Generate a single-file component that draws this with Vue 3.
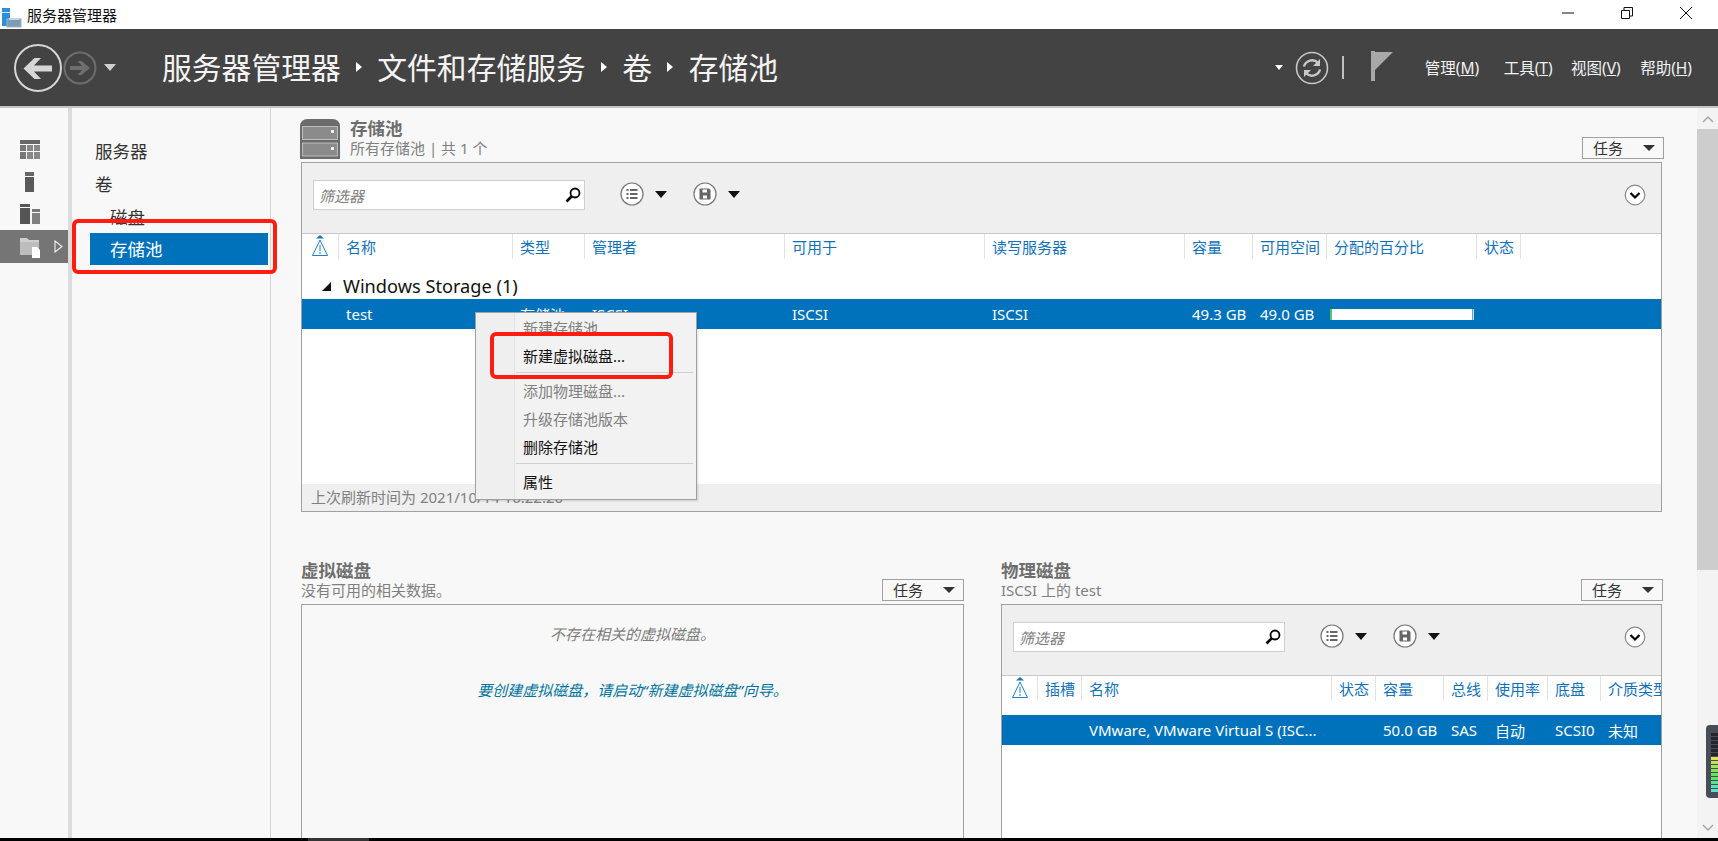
<script setup>
// Server Manager, File and Storage Services > Volumes > Storage Pools.
const railIcons = ['table', 'server', 'servers']
const crumbs = ['服务器管理器', '文件和存储服务', '卷', '存储池']

const menus = [
  { label: '管理', key: 'M' },
  { label: '工具', key: 'T' },
  { label: '视图', key: 'V' },
  { label: '帮助', key: 'H' }
]

const poolCols = ['名称', '类型', '管理者', '可用于', '读写服务器', '容量', '可用空间', '分配的百分比', '状态']
const diskCols = ['插槽', '名称', '状态', '容量', '总线', '使用率', '底盘', '介质类型']
const diskRow = ['', 'VMware, VMware Virtual S (ISC...', '', '50.0 GB', 'SAS', '自动', 'SCSI0', '未知']

// level meter in the corner, dark ticks on top and coloured ones below
const meter = Array.from({ length: 15 }, (_, i) => {
  if (i < 6) return '#23262c'
  const hue = 60 + (i - 6) * 14
  return `hsl(${hue}, 70%, 62%)`
})
</script>

<template>
  <div class="app">
    <div class="titlebar">
      <svg class="app-icon" viewBox="0 0 22 24" width="22" height="24" aria-hidden="true">
        <rect x="2" y="4" width="8" height="18" fill="#2f8fdc" />
        <rect x="2" y="8" width="8" height="1" fill="#cfe6f8" />
        <rect x="7" y="15" width="14" height="8" fill="#7b9db8" stroke="#9db4c6" stroke-width="1" />
        <rect x="9" y="14" width="10" height="2" fill="#c6d4df" />
      </svg>
      <span class="app-name">服务器管理器</span>
      <div class="win-controls">
        <svg viewBox="0 0 12 12" width="12" height="12" class="win-min" aria-hidden="true">
          <path d="M0 6H12" stroke="#111" fill="none" />
        </svg>
        <svg viewBox="0 0 12 12" width="12" height="12" class="win-max" aria-hidden="true">
          <path d="M0.5 3.5H8.5V11.5H0.5ZM3 3.5V0.5H11.5V9H8.5" stroke="#111" fill="none" />
        </svg>
        <svg viewBox="0 0 12 12" width="12" height="12" class="win-close" aria-hidden="true">
          <path d="M0 0L12 12M12 0L0 12" stroke="#111" fill="none" />
        </svg>
      </div>
    </div>

    <header class="header">
      <svg class="nav-back" viewBox="0 0 50 50" width="50" height="50" aria-hidden="true">
        <circle cx="25" cy="25" r="23" fill="none" stroke="#d6d6d6" stroke-width="2" />
        <path d="M39 22.5H21L28 15H21.5L10.5 25.5L21.5 36H28L21 28.5H39Z" fill="#d6d6d6" />
      </svg>
      <svg class="nav-forward" viewBox="0 0 34 34" width="34" height="34" aria-hidden="true">
        <circle cx="17" cy="17" r="15.5" fill="none" stroke="#6e6e6e" stroke-width="2" />
        <path d="M7 15H19L14.5 10H18.5L27 17L18.5 24H14.5L19 19H7Z" fill="#6e6e6e" />
      </svg>
      <span class="nav-caret"></span>

      <div class="crumbs">
        <template v-for="(crumb, i) in crumbs" :key="crumb">
          <span v-if="i" class="crumb-sep"></span>
          <span>{{ crumb }}</span>
        </template>
      </div>

      <div class="header-right">
        <span class="refresh-caret"></span>
        <svg class="refresh" viewBox="0 0 34 34" width="34" height="34" aria-hidden="true">
          <circle cx="17" cy="17" r="15.5" fill="none" stroke="#c8c8c8" stroke-width="1.6" />
          <path d="M9 15.5A8.2 8.2 0 0 1 23 12" fill="none" stroke="#c8c8c8" stroke-width="2.4" />
          <path d="M25 8V15H18Z" fill="#c8c8c8" />
          <path d="M25 18.5A8.2 8.2 0 0 1 11 22" fill="none" stroke="#c8c8c8" stroke-width="2.4" />
          <path d="M9 26V19H16Z" fill="#c8c8c8" />
        </svg>
        <span class="header-div"></span>
        <svg class="flag" viewBox="0 0 22 30" width="22" height="30" aria-hidden="true">
          <rect x="0" y="0" width="4" height="30" fill="#a8a8a8" />
          <path d="M4 1H22L4 19Z" fill="#a8a8a8" />
        </svg>
        <nav class="menus">
          <span v-for="m in menus" :key="m.key" class="menu-item">{{ m.label }}(<u>{{ m.key }}</u>)</span>
        </nav>
      </div>
    </header>

    <div class="body">
      <aside class="rail">
        <div v-for="icon in railIcons" :key="icon" class="rail-item">
          <svg v-if="icon === 'table'" viewBox="0 0 20 19" width="20" height="19" aria-hidden="true">
            <rect width="20" height="4" fill="#666" />
            <rect y="5" width="6" height="6" fill="#777" /><rect x="7" y="5" width="6" height="6" fill="#888" /><rect x="14" y="5" width="6" height="6" fill="#888" />
            <rect y="12" width="6" height="7" fill="#777" /><rect x="7" y="12" width="6" height="7" fill="#888" /><rect x="14" y="12" width="6" height="7" fill="#888" />
          </svg>
          <svg v-else-if="icon === 'server'" viewBox="0 0 9 20" width="9" height="20" aria-hidden="true">
            <rect width="9" height="4" fill="#666" />
            <rect y="5" width="9" height="15" fill="#5a5a5a" />
          </svg>
          <svg v-else viewBox="0 0 20 20" width="20" height="20" aria-hidden="true">
            <rect width="10" height="3" fill="#555" />
            <rect y="4" width="10" height="16" fill="#555" />
            <rect x="12" y="5" width="8" height="3" fill="#777" />
            <rect x="12" y="9" width="8" height="11" fill="#808080" />
          </svg>
        </div>
        <div class="rail-item rail-item--active">
          <svg viewBox="0 0 21 22" width="21" height="22" aria-hidden="true">
            <path d="M0 2H7L9 4H19V15H0Z" fill="#cfcfcf" />
            <path d="M0 6H19V19H0Z" fill="#bdbdbd" />
            <path d="M12 11H17L20 14V22H12Z" fill="#fff" />
          </svg>
          <svg class="rail-arrow" viewBox="0 0 9 13" width="9" height="13" aria-hidden="true">
            <path d="M1 1L8 6.5L1 12Z" fill="none" stroke="#f0f0f0" stroke-width="1.1" />
          </svg>
        </div>
      </aside>
      <div class="gutter"></div>

      <nav class="side">
        <div class="side-item">服务器</div>
        <div class="side-item side-item--vol">卷</div>
        <div class="side-item side-item--sub side-item--disk">磁盘</div>
        <div class="side-item side-item--sub side-item--active">存储池</div>
      </nav>

      <main class="content">
        <section>
          <div class="section-head">
            <svg class="pool-icon" viewBox="0 0 40 40" width="40" height="40" aria-hidden="true">
              <path d="M0 8Q0 0 8 0H32Q40 0 40 8V40H0Z" fill="#6b6b6b" />
              <rect x="2.5" y="7.5" width="35" height="13" fill="#8b8b8b" stroke="#bdbdbd" />
              <rect x="2.5" y="24" width="35" height="13" fill="#8b8b8b" stroke="#bdbdbd" />
              <rect x="31" y="11" width="3" height="3" fill="#eee" />
              <rect x="31" y="28" width="3" height="3" fill="#eee" />
            </svg>
            <div class="section-text">
              <div class="section-title">存储池</div>
              <div class="section-sub">所有存储池 | 共 1 个</div>
            </div>
            <div class="task-btn"><span>任务</span><i class="caret"></i></div>
          </div>

          <div class="panel panel--pool">
            <div class="toolbar">
              <div class="filter">
                <input type="text" placeholder="筛选器" />
                <svg viewBox="0 0 16 16" width="16" height="16" aria-hidden="true">
                  <circle cx="10" cy="6" r="4.5" fill="none" stroke="#000" stroke-width="1.8" />
                  <path d="M6.5 9.5L1.5 14.5" stroke="#000" stroke-width="2.6" />
                </svg>
              </div>
              <svg class="tool-circle" viewBox="0 0 24 24" width="24" height="24" aria-hidden="true">
                <circle cx="12" cy="12" r="11" fill="#fff" stroke="#777" stroke-width="1.2" />
                <path d="M6.5 8H8.5M6.5 12H8.5M6.5 16H8.5M10 8H17.5M10 12H17.5M10 16H17.5" stroke="#666" stroke-width="2" />
              </svg>
              <i class="caret caret--tool"></i>
              <svg class="tool-circle tool-circle--save" viewBox="0 0 24 24" width="24" height="24" aria-hidden="true">
                <circle cx="12" cy="12" r="11" fill="#fff" stroke="#777" stroke-width="1.2" />
                <path d="M6.5 6.5H16L17.5 8V17.5H6.5Z" fill="#666" />
                <rect x="9.5" y="7.5" width="4.5" height="3" fill="#fff" />
                <rect x="10" y="13.5" width="4" height="3" fill="#fff" />
              </svg>
              <i class="caret caret--tool"></i>
              <svg class="tool-expand" viewBox="0 0 22 22" width="22" height="22" aria-hidden="true">
                <circle cx="11" cy="11" r="9.8" fill="#fff" stroke="#888" stroke-width="1.2" />
                <path d="M6.5 9L11 13.5L15.5 9" fill="none" stroke="#000" stroke-width="2.2" />
              </svg>
            </div>

            <div class="grid-row grid-head pool-cols">
              <div class="alert-cell">
                <svg viewBox="0 0 16 21" width="16" height="21" aria-hidden="true">
                  <path d="M8 0L12 3.5H4Z" fill="#1775bb" />
                  <path d="M8 5L15.5 20.5H0.5Z" fill="#fff" stroke="#1f7fc4" stroke-width="1" />
                  <path d="M8 10V16M8 17V19" stroke="#1f7fc4" stroke-width="1" />
                </svg>
              </div>
              <div v-for="col in poolCols" :key="col" class="head-cell">{{ col }}</div>
              <div class="head-cell"></div>
            </div>

            <div class="group-row">
              <i class="group-toggle"></i>
              <span>Windows Storage (1)</span>
            </div>

            <div class="grid-row data-row pool-cols">
              <div></div>
              <div class="data-cell">test</div>
              <div class="data-cell">存储池</div>
              <div class="data-cell">ISCSI</div>
              <div class="data-cell">ISCSI</div>
              <div class="data-cell">ISCSI</div>
              <div class="data-cell">49.3 GB</div>
              <div class="data-cell">49.0 GB</div>
              <div class="data-cell data-cell--bar"><div class="usage"><div class="usage-fill"></div></div></div>
              <div></div>
            </div>

            <div class="panel-fill"></div>
            <div class="panel-foot">上次刷新时间为 2021/10/14 16:22:20</div>
          </div>
        </section>

        <div class="lower">
          <section>
            <div class="section-head">
              <div class="section-text">
                <div class="section-title">虚拟磁盘</div>
                <div class="section-sub">没有可用的相关数据。</div>
              </div>
              <div class="task-btn"><span>任务</span><i class="caret"></i></div>
            </div>
            <div class="panel panel--empty">
              <p class="empty-note">不存在相关的虚拟磁盘。</p>
              <p class="empty-link">要创建虚拟磁盘，请启动“新建虚拟磁盘”向导。</p>
            </div>
          </section>

          <section>
            <div class="section-head">
              <div class="section-text">
                <div class="section-title">物理磁盘</div>
                <div class="section-sub">ISCSI 上的 test</div>
              </div>
              <div class="task-btn"><span>任务</span><i class="caret"></i></div>
            </div>
            <div class="panel panel--disk">
              <div class="toolbar">
                <div class="filter">
                  <input type="text" placeholder="筛选器" />
                  <svg viewBox="0 0 16 16" width="16" height="16" aria-hidden="true">
                    <circle cx="10" cy="6" r="4.5" fill="none" stroke="#000" stroke-width="1.8" />
                    <path d="M6.5 9.5L1.5 14.5" stroke="#000" stroke-width="2.6" />
                  </svg>
                </div>
                <svg class="tool-circle" viewBox="0 0 24 24" width="24" height="24" aria-hidden="true">
                  <circle cx="12" cy="12" r="11" fill="#fff" stroke="#777" stroke-width="1.2" />
                  <path d="M6.5 8H8.5M6.5 12H8.5M6.5 16H8.5M10 8H17.5M10 12H17.5M10 16H17.5" stroke="#666" stroke-width="2" />
                </svg>
                <i class="caret caret--tool"></i>
                <svg class="tool-circle tool-circle--save" viewBox="0 0 24 24" width="24" height="24" aria-hidden="true">
                  <circle cx="12" cy="12" r="11" fill="#fff" stroke="#777" stroke-width="1.2" />
                  <path d="M6.5 6.5H16L17.5 8V17.5H6.5Z" fill="#666" />
                  <rect x="9.5" y="7.5" width="4.5" height="3" fill="#fff" />
                  <rect x="10" y="13.5" width="4" height="3" fill="#fff" />
                </svg>
                <i class="caret caret--tool"></i>
                <svg class="tool-expand" viewBox="0 0 22 22" width="22" height="22" aria-hidden="true">
                  <circle cx="11" cy="11" r="9.8" fill="#fff" stroke="#888" stroke-width="1.2" />
                  <path d="M6.5 9L11 13.5L15.5 9" fill="none" stroke="#000" stroke-width="2.2" />
                </svg>
              </div>

              <div class="grid-row grid-head disk-cols">
                <div class="alert-cell">
                  <svg viewBox="0 0 16 21" width="16" height="21" aria-hidden="true">
                    <path d="M8 0L12 3.5H4Z" fill="#1775bb" />
                    <path d="M8 5L15.5 20.5H0.5Z" fill="#fff" stroke="#1f7fc4" stroke-width="1" />
                    <path d="M8 10V16M8 17V19" stroke="#1f7fc4" stroke-width="1" />
                  </svg>
                </div>
                <div v-for="col in diskCols" :key="col" class="head-cell">{{ col }}</div>
              </div>

              <div class="grid-row data-row data-row--disk disk-cols">
                <div></div>
                <div v-for="(val, i) in diskRow" :key="i" class="data-cell">{{ val }}</div>
              </div>
            </div>
          </section>
        </div>
      </main>

      <div class="scrollbar">
        <div class="scroll-btn">
          <svg viewBox="0 0 12 8" width="12" height="8" aria-hidden="true">
            <path d="M1 7L6 2L11 7" fill="none" stroke="#a6a6a6" stroke-width="1.5" />
          </svg>
        </div>
        <div class="scroll-thumb"></div>
        <div class="scroll-track"></div>
        <div class="scroll-btn">
          <svg viewBox="0 0 12 8" width="12" height="8" aria-hidden="true">
            <path d="M1 1L6 6L11 1" fill="none" stroke="#a6a6a6" stroke-width="1.5" />
          </svg>
        </div>
      </div>
    </div>

    <div class="taskstrip"><span></span></div>

    <!-- context menu and the red annotation boxes lie over the page -->
    <div class="ctx-menu">
      <div class="ctx-item ctx-item--off">新建存储池</div>
      <div class="ctx-item">新建虚拟磁盘...</div>
      <div class="ctx-sep"></div>
      <div class="ctx-item ctx-item--off">添加物理磁盘...</div>
      <div class="ctx-item ctx-item--off">升级存储池版本</div>
      <div class="ctx-item">删除存储池</div>
      <div class="ctx-sep"></div>
      <div class="ctx-item">属性</div>
    </div>
    <div class="mark mark--nav"></div>
    <div class="mark mark--menu"></div>

    <div class="meter">
      <i v-for="(color, i) in meter" :key="i" :style="{ background: color }"></i>
    </div>
  </div>
</template>

<style scoped>
.app {
  position: relative;
  width: 1718px;
  height: 841px;
  display: flex;
  flex-direction: column;
  overflow: hidden;
  background: #f8f8f8;
  color: #222;
  font-family: "Noto Sans", "Noto Sans CJK SC", sans-serif;
  font-size: 15px;
}

.titlebar {
  height: 29px;
  display: flex;
  align-items: center;
  background: #fff;
  flex-shrink: 0;
}

.app-icon {
  flex-shrink: 0;
  margin-top: 2px;
}

.app-name {
  margin-left: 5px;
  font-size: 15px;
  color: #111;
}

.win-controls {
  margin-left: auto;
  margin-top: -3px;
  display: flex;
  align-items: center;
}

.win-min {
  margin-right: 47px;
}

.win-max {
  margin-right: 47px;
}

.win-close {
  margin-right: 26px;
}

.header {
  height: 77px;
  flex-shrink: 0;
  display: flex;
  align-items: center;
  background: #434343;
  border-bottom: 2px solid #c4c4c4;
  color: #fff;
}

.nav-back {
  margin-left: 13px;
  flex-shrink: 0;
}

.nav-forward {
  margin-left: 0;
  flex-shrink: 0;
}

.nav-caret {
  width: 0;
  height: 0;
  margin-left: 7px;
  border-left: 6px solid transparent;
  border-right: 6px solid transparent;
  border-top: 7px solid #d0d0d0;
}

.crumbs {
  display: flex;
  align-items: center;
  margin-left: 46px;
  font-size: 29.8px;
  color: #f4f4f4;
  line-height: 1;
}

.crumb-sep {
  width: 36.5px;
  display: flex;
  justify-content: center;
}

.crumb-sep::before {
  content: "";
  border-top: 5px solid transparent;
  border-bottom: 5px solid transparent;
  border-left: 6px solid #fff;
}

.header-right {
  margin-left: auto;
  display: flex;
  align-items: center;
}

.refresh-caret {
  width: 0;
  height: 0;
  border-left: 4.5px solid transparent;
  border-right: 4.5px solid transparent;
  border-top: 5px solid #fff;
}

.refresh {
  margin-left: 12px;
}

.header-div {
  width: 2px;
  height: 23px;
  margin-left: 13px;
  background: #c0c0c0;
}

.flag {
  margin-left: 27px;
  margin-top: -3px;
}

.menus {
  display: flex;
  margin-left: 32px;
  margin-right: 26px;
  font-size: 15.5px;
}

.menu-item {
  color: #f2f2f2;
  margin-left: 24.5px;
}

.menu-item:nth-child(1) {
  margin-left: 0;
}

.menu-item:nth-child(3) {
  margin-left: 18.5px;
}

.menu-item:nth-child(4) {
  margin-left: 19.5px;
}

.body {
  flex: 1;
  min-height: 0;
  display: flex;
}

.rail {
  width: 68px;
  flex-shrink: 0;
  padding-top: 23px;
  background: #f8f8f8;
}

.rail-item {
  position: relative;
  height: 33px;
  display: flex;
  align-items: center;
  padding-left: 20px;
}

.rail-item:nth-child(1) svg {
  margin-top: 3px;
}

.rail-item:nth-child(2) {
  padding-left: 25px;
}

.rail-item:nth-child(2) svg {
  margin-top: 2px;
}

.rail-item--active {
  background: #757575;
}

.rail-arrow {
  position: absolute;
  left: 54px;
  top: 10px;
}

.gutter {
  width: 4px;
  flex-shrink: 0;
  background: #dcdcdc;
}

.side {
  width: 198px;
  flex-shrink: 0;
  padding-top: 29px;
  border-right: 1px solid #d4d4d4;
  box-sizing: content-box;
}

.side-item {
  height: 32px;
  line-height: 29px;
  margin-right: 2px;
  padding-left: 23px;
  font-size: 17.5px;
  color: #333;
}

.side-item--vol {
  line-height: 31px;
}

.side-item--sub {
  margin-left: 18px;
  padding-left: 20px;
}

.side-item--disk {
  line-height: 32px;
}

.side-item--active {
  line-height: 32px;
  background: #0072bc;
  color: #fff;
}

.content {
  flex: 1;
  min-width: 0;
  overflow: hidden;
  padding: 10px 35px 0 30px;
}

.section-head {
  display: flex;
  align-items: flex-end;
  height: 41px;
  margin-bottom: 3px;
  line-height: 1.2;
}

.section-text {
  padding-bottom: 2px;
}

.pool-icon {
  margin-left: -1px;
  margin-right: 10px;
  flex-shrink: 0;
}

.section-title {
  font-size: 17.5px;
  font-weight: 700;
  color: #6e6e6e;
}

.section-sub {
  font-size: 15px;
  color: #808080;
}

.task-btn {
  margin-left: auto;
  margin-right: -1px;
  width: 82px;
  height: 22px;
  box-sizing: border-box;
  display: flex;
  align-items: center;
  padding: 0 8px 0 10px;
  border: 1px solid #a0a0a0;
  font-size: 15px;
  color: #333;
  background: #f8f8f8;
}

section:first-child > .section-head > .task-btn {
  margin-right: -2px;
}

.lower section:first-child > .section-head > .task-btn {
  margin-right: 0;
}

.caret {
  display: block;
  width: 0;
  height: 0;
  margin-left: auto;
  border-left: 6px solid transparent;
  border-right: 6px solid transparent;
  border-top: 6px solid #333;
}

.panel {
  display: flex;
  flex-direction: column;
  box-sizing: border-box;
  overflow: hidden;
  border: 1px solid #a0a0a0;
  background: #fff;
}

.panel--pool {
  height: 350px;
}

.panel--empty {
  height: 260px;
  background: #f8f8f8;
  align-items: center;
}

.panel--disk {
  height: 260px;
}

.toolbar {
  height: 71px;
  flex-shrink: 0;
  box-sizing: border-box;
  display: flex;
  align-items: flex-start;
  padding: 17px 15px 0 11px;
  background: #efefef;
  border-bottom: 1px solid #c8c8c8;
}

.filter {
  width: 272px;
  height: 30px;
  flex-shrink: 0;
  box-sizing: border-box;
  display: flex;
  align-items: center;
  padding-right: 3px;
  background: #fff;
  border: 1px solid #cfcfcf;
}

.filter input {
  flex: 1;
  min-width: 0;
  height: 100%;
  border: 0;
  padding: 0 0 0 5px;
  outline: none;
  background: transparent;
  font: italic 15px "Noto Sans CJK SC", sans-serif;
}

.filter input::placeholder {
  color: #808080;
  opacity: 1;
}

.tool-circle {
  margin-left: 35px;
  margin-top: 2px;
  flex-shrink: 0;
}

.tool-circle--save {
  margin-left: 26px;
}

.caret--tool {
  margin-left: 11px;
  margin-top: 11px;
  border-top-color: #111;
  border-top-width: 7px;
}

.tool-expand {
  margin-left: auto;
  margin-top: 4px;
  flex-shrink: 0;
}

.grid-row {
  display: grid;
  flex-shrink: 0;
}

.pool-cols {
  grid-template-columns: 36px 174px 72px 200px 200px 200px 68px 74px 150px 44px 1fr;
}

.disk-cols {
  grid-template-columns: 35px 44px 250px 44px 68px 44px 60px 53px 1fr;
}

.grid-head {
  height: 25px;
  overflow: hidden;
  white-space: nowrap;
}

.alert-cell {
  display: flex;
  justify-content: center;
  padding-top: 1px;
}

.head-cell {
  padding-left: 7px;
  line-height: 26px;
  font-size: 15px;
  color: #1272b8;
  border-left: 1px solid #e2e2e2;
}

.group-row {
  height: 40px;
  flex-shrink: 0;
  box-sizing: border-box;
  display: flex;
  align-items: center;
  padding: 14px 0 0 20px;
  font-size: 18.2px;
  color: #111;
}

.group-toggle {
  width: 0;
  height: 0;
  margin-right: 12px;
  border-left: 9px solid transparent;
  border-bottom: 9px solid #111;
}

.data-row {
  height: 30px;
  align-items: center;
  background: #0072bc;
  color: #fff;
  white-space: nowrap;
}

.data-row--disk {
  margin-top: 14px;
}

.data-cell {
  padding-left: 8px;
  font-size: 15px;
}

.data-cell--bar {
  padding-left: 4px;
}

.usage {
  width: 144px;
  height: 11px;
  box-sizing: border-box;
  background: #5aa0d0;
  border-left: 2px solid #5fc36a;
  border-right: 1px solid #cfe0ee;
}

.usage-fill {
  height: 100%;
  width: 99%;
  background: #fff;
}

.panel-fill {
  flex: 1;
}

.panel-foot {
  height: 27px;
  flex-shrink: 0;
  padding-left: 9px;
  line-height: 27px;
  font-size: 15px;
  color: #808080;
  background: #efefef;
}

.lower {
  display: grid;
  grid-template-columns: 663px minmax(0, 1fr);
  column-gap: 37px;
  margin-top: 48px;
}

.empty-note {
  margin: 18px 0 0;
  font-size: 15px;
  font-style: italic;
  color: #7c7c7c;
}

.empty-link {
  margin: 35px 0 0;
  font-size: 15px;
  font-style: italic;
  color: #00749c;
}

.scrollbar {
  width: 21px;
  flex-shrink: 0;
  display: flex;
  flex-direction: column;
  background: #f3f3f3;
}

.scroll-btn {
  height: 21px;
  flex-shrink: 0;
  display: flex;
  align-items: center;
  justify-content: center;
}

.scroll-thumb {
  height: 441px;
  flex-shrink: 0;
  background: #cdcdcd;
}

.scroll-track {
  flex: 1;
}

.taskstrip {
  height: 3px;
  flex-shrink: 0;
  background: #000;
}

.taskstrip span {
  display: block;
  width: 61px;
  height: 3px;
  margin-left: 308px;
  background: #333;
}

.ctx-menu {
  position: absolute;
  left: 475px;
  top: 312px;
  width: 222px;
  height: 188px;
  box-sizing: border-box;
  padding: 1px 3px 0 38px;
  background: linear-gradient(to right, #efefef 38px, #e2e2e2 38px, #e2e2e2 39px, #f2f2f2 39px);
  border: 1px solid #a0a0a0;
  box-shadow: 1px 1px 2px rgba(0, 0, 0, 0.15);
}

.ctx-item {
  height: 28px;
  line-height: 28px;
  padding-left: 9px;
  font-size: 15px;
  color: #111;
}

.ctx-item--off {
  color: #808080;
}

.ctx-sep {
  height: 1px;
  margin: 2px 0 4px 2px;
  background: #d0d0d0;
}

.mark {
  position: absolute;
  box-sizing: border-box;
  border: 4px solid #ff1d12;
  border-radius: 6px;
}

.mark--nav {
  left: 72px;
  top: 219px;
  width: 205px;
  height: 55px;
}

.mark--menu {
  left: 490px;
  top: 332px;
  width: 183px;
  height: 47px;
}

.meter {
  position: absolute;
  left: 1706px;
  top: 725px;
  width: 14px;
  height: 73px;
  box-sizing: border-box;
  display: flex;
  flex-direction: column;
  gap: 1px;
  padding: 8px 2px 0 5px;
  border-radius: 4px 0 0 4px;
  background: #474c57;
}

.meter i {
  display: block;
  height: 3px;
}
</style>

<style>
html,
body {
  margin: 0;
  background: #f8f8f8;
}
</style>
